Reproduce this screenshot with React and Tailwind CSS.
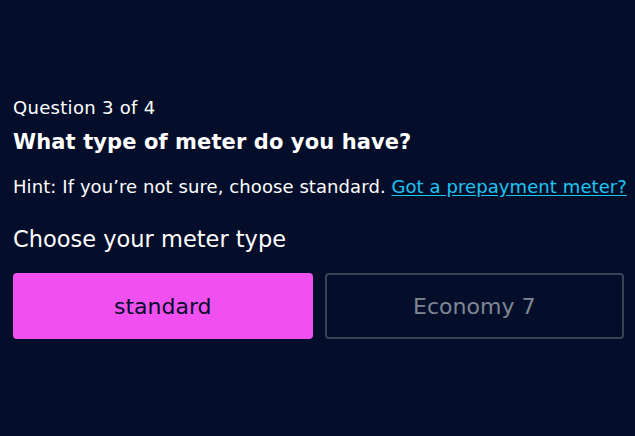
import React, { useState } from 'react';

const options = [
  { id: 'standard', label: 'standard' },
  { id: 'economy7', label: 'Economy 7' },
];

function App() {
  const [meter, setMeter] = useState('standard');

  return (
    <div className="min-h-screen bg-[#040e2b] text-white font-['DejaVu_Sans',sans-serif]">
      <main className="pt-[97px] pl-[13px] pr-[11px]">
        {/* Question header */}
        <p className="text-[18px] leading-[22px] tracking-[0.3px]">Question 3 of 4</p>
        <h1 className="mt-[10px] text-[21px] leading-[26px] font-bold tracking-[0.1px]">What type of meter do you have?</h1>
        <p className="mt-[21px] text-[18px] leading-[22px] tracking-[0.08px] whitespace-nowrap">
          Hint: If you’re not sure, choose standard.{' '}
          <a href="#" className="text-[#1ac6f2] underline underline-offset-2">Got a prepayment meter?</a>
        </p>

        {/* Meter options */}
        <div role="radiogroup" aria-label="Choose your meter type" className="mt-[27px]">
          <p className="text-[22.5px] leading-[28px]">Choose your meter type</p>
          <div className="mt-[20px] grid grid-cols-2 gap-3">
            {options.map((opt) => (
              <button
                key={opt.id}
                role="radio"
                aria-checked={meter === opt.id}
                onClick={() => setMeter(opt.id)}
                className={
                  meter === opt.id
                    ? 'h-[66px] rounded text-[22px] bg-[#ef50ef] text-[#040e2b]'
                    : 'h-[66px] rounded text-[22px] border-2 border-[#394155] text-[#7e8791]'
                }
              >
                {opt.label}
              </button>
            ))}
          </div>
        </div>
      </main>
    </div>
  );
}

export default App;
